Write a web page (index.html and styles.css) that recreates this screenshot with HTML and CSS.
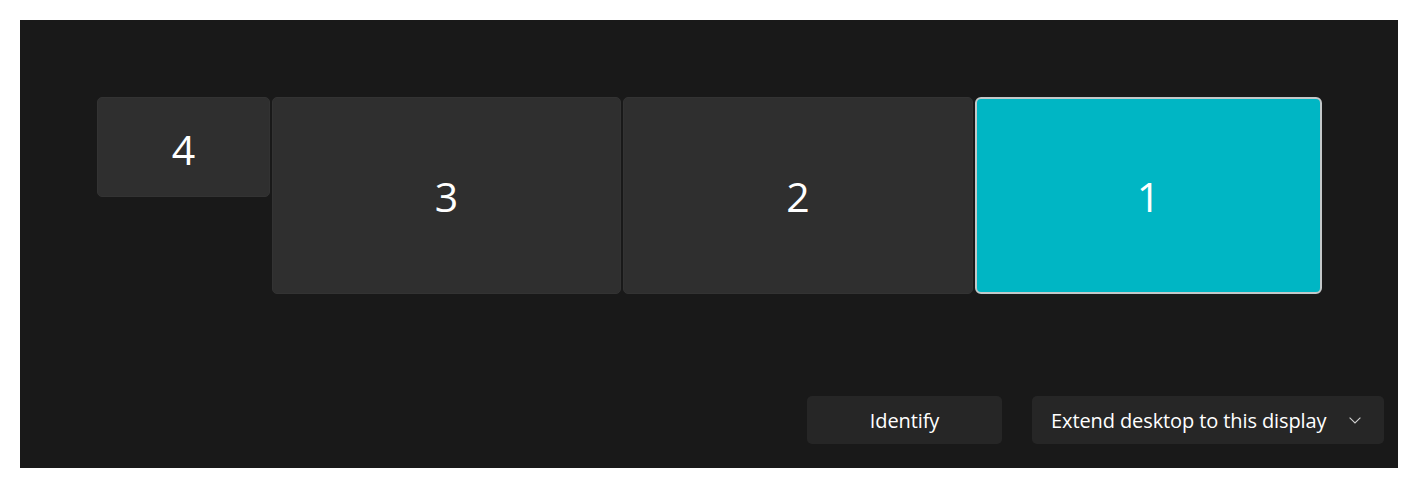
FILE: index.html
```html
<!DOCTYPE html>
<html>
<head>
<meta charset="utf-8">
<link rel="stylesheet" href="styles.css">
</head>
<body>
<div class="panel">
  <div class="monitors">
    <div class="monitor m4">4</div>
    <div class="monitor m3">3</div>
    <div class="monitor m2">2</div>
    <div class="monitor m1 selected">1</div>
  </div>
  <div class="actions">
    <button class="btn identify">Identify</button>
    <button class="btn dropdown"><span>Extend desktop to this display</span>
      <svg class="chev" width="12" height="7" viewBox="0 0 12 7"><path d="M0.6 0.6 L6 6 L11.4 0.6" fill="none" stroke="#d0d0d0" stroke-width="1.1"/></svg>
    </button>
  </div>
</div>
</body>
</html>
```
FILE: styles.css
```css
html, body {
  margin: 0;
  padding: 0;
  background: #ffffff;
}
body {
  padding: 20px;
  font-family: "Open Sans", "Noto Sans", sans-serif;
}
.panel {
  width: 1378px;
  height: 448px;
  box-sizing: border-box;
  background: #191919;
  padding: 77px 14px 24px 77px;
  display: flex;
  flex-direction: column;
  justify-content: space-between;
}
.monitors {
  display: flex;
  align-items: flex-start;
  gap: 2px;
}
.monitor {
  box-sizing: border-box;
  height: 197px;
  background: #2f2f2f;
  border: 1px solid #333333;
  border-radius: 5px;
  color: #ffffff;
  font-size: 41px;
  display: flex;
  align-items: center;
  justify-content: center;
}
.m4 { width: 173px; height: 100px; padding-top: 4px; }
.m3 { width: 349px; }
.m2 { width: 350px; }
.m1 { width: 347px; }
.selected {
  background: #00b6c4;
  border: 2px solid #c3c8c9;
  border-radius: 6px;
}
.actions {
  display: flex;
  justify-content: flex-end;
  gap: 30px;
}
.btn {
  box-sizing: border-box;
  height: 48px;
  background: #262626;
  border: none;
  border-radius: 5px;
  color: #ffffff;
  font-family: "Open Sans", "Noto Sans", sans-serif;
  font-size: 20px;
  letter-spacing: -0.1px;
  padding: 0;
}
.identify {
  width: 195px;
}
.dropdown {
  width: 352px;
  display: flex;
  align-items: center;
  justify-content: space-between;
  padding: 0 23px 0 19px;
}
.chev {
  display: block;
}
```
